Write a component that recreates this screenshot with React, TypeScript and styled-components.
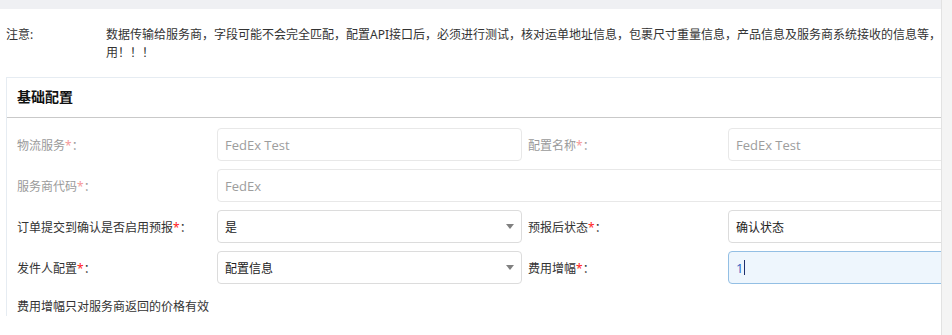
import React from "react";
import styled, { createGlobalStyle } from "styled-components";

const GlobalStyle = createGlobalStyle`
  html, body {
    margin: 0;
    padding: 0;
    background: #ffffff;
    overflow: hidden;
  }
  body {
    font-family: "Noto Sans", "Noto Sans CJK SC", sans-serif;
    font-size: 12px;
    color: #333333;
  }
`;

const Page = styled.div`
  display: flex;
  width: 952px;
  height: 335px;
  overflow: hidden;
`;

const Main = styled.div`
  flex: 1;
  min-width: 0;
  overflow: hidden;
`;

const Content = styled.div`
  width: 1040px;
`;

const ScrollTrack = styled.div`
  width: 10px;
  flex: none;
  background: #f4f4f4;
  border-left: 1px solid #e2e2e2;
`;

const TopStrip = styled.div`
  height: 9px;
  background: #eff0f3;
`;

const Notice = styled.div`
  display: flex;
  margin-top: 17px;
  line-height: 18px;
`;

const NoticeLabel = styled.div`
  width: 100px;
  flex: none;
  padding-left: 6px;
`;

const NoticeText = styled.div`
  width: 926px;
  flex: none;
`;

const Card = styled.section`
  margin: 15px 0 0 6px;
  width: 1040px;
  border: 1px solid #e6ecf2;
  border-right: none;
  border-bottom: none;
`;

const CardHeader = styled.h3`
  margin: 0;
  box-sizing: border-box;
  height: 40px;
  display: flex;
  align-items: center;
  padding: 0 0 2px 10px;
  font-size: 14px;
  line-height: 18px;
  font-weight: bold;
  color: #111111;
  border-bottom: 1px solid #c9c9c9;
`;

const CardBody = styled.div`
  padding: 10px 0 0 10px;
`;

const Row = styled.div`
  display: flex;
  align-items: center;
  height: 33px;
  margin-bottom: 8px;
`;

const Label = styled.div<{ $disabled?: boolean; $offset?: boolean }>`
  flex: none;
  box-sizing: border-box;
  width: ${(p) => (p.$offset ? "206px" : "200px")};
  padding-left: ${(p) => (p.$offset ? "6px" : "0")};
  color: ${(p) => (p.$disabled ? "#9a9a9a" : "#333333")};
  white-space: nowrap;
`;

const Star = styled.span<{ $disabled?: boolean }>`
  color: ${(p) => (p.$disabled ? "#f59a9a" : "#ff1a1a")};
`;

type Variant = "disabled" | "normal" | "focused";

const Control = styled.div<{ $variant: Variant; $wide?: boolean }>`
  flex: none;
  box-sizing: border-box;
  width: ${(p) => (p.$wide ? "816px" : "305px")};
  height: 33px;
  display: flex;
  align-items: center;
  justify-content: space-between;
  padding: 0 7px;
  border-radius: 4px;
  font-size: 12px;
  border: 1px solid
    ${(p) =>
      p.$variant === "disabled"
        ? "#e8e8e8"
        : p.$variant === "focused"
        ? "#93bfe4"
        : "#dcdcdc"};
  background: ${(p) => (p.$variant === "focused" ? "#eef6fd" : "#ffffff")};
  color: ${(p) =>
    p.$variant === "disabled"
      ? "#9d9d9d"
      : p.$variant === "focused"
      ? "#2b5fc4"
      : "#222222"};
`;

const Latin = styled.span`
  font-family: "Open Sans", "Noto Sans", sans-serif;
  font-size: 13px;
`;

const Value = styled.span`
  display: inline-flex;
  align-items: center;
`;

const Caret = styled.span`
  display: inline-block;
  width: 1px;
  height: 15px;
  margin-left: 1px;
  background: #1c2f6e;
`;

const Arrow = styled.span`
  width: 0;
  height: 0;
  border-left: 4.5px solid transparent;
  border-right: 4.5px solid transparent;
  border-top: 5px solid #808080;
`;

const Hint = styled.div`
  padding-top: 6px;
  line-height: 18px;
  color: #333333;
`;

const FieldLabel: React.FC<{ text: string; disabled?: boolean; offset?: boolean }> = ({
  text,
  disabled,
  offset,
}) => (
  <Label $disabled={disabled} $offset={offset}>
    {text}
    <Star $disabled={disabled}>*</Star>：
  </Label>
);

export default function App() {
  return (
    <>
      <GlobalStyle />
      <Page>
        <Main>
          <Content>
            <TopStrip />
            <Notice>
              <NoticeLabel>注意:</NoticeLabel>
              <NoticeText>
                数据传输给服务商，字段可能不会完全匹配，配置API接口后，必须进行测试，核对运单地址信息，包裹尺寸重量信息，产品信息及服务商系统接收的信息等，确认无误后再启用！！！
              </NoticeText>
            </Notice>
            <Card>
              <CardHeader>基础配置</CardHeader>
              <CardBody>
                <Row>
                  <FieldLabel text="物流服务" disabled />
                  <Control $variant="disabled">
                    <Latin>FedEx Test</Latin>
                  </Control>
                  <FieldLabel text="配置名称" disabled offset />
                  <Control $variant="disabled">
                    <Latin>FedEx Test</Latin>
                  </Control>
                </Row>
                <Row>
                  <FieldLabel text="服务商代码" disabled />
                  <Control $variant="disabled" $wide>
                    <Latin>FedEx</Latin>
                  </Control>
                </Row>
                <Row>
                  <FieldLabel text="订单提交到确认是否启用预报" />
                  <Control $variant="normal">
                    <Value>是</Value>
                    <Arrow />
                  </Control>
                  <FieldLabel text="预报后状态" offset />
                  <Control $variant="normal">确认状态</Control>
                </Row>
                <Row>
                  <FieldLabel text="发件人配置" />
                  <Control $variant="normal">
                    <Value>配置信息</Value>
                    <Arrow />
                  </Control>
                  <FieldLabel text="费用增幅" offset />
                  <Control $variant="focused">
                    <Value>
                      <Latin>1</Latin>
                      <Caret />
                    </Value>
                  </Control>
                </Row>
                <Hint>费用增幅只对服务商返回的价格有效</Hint>
              </CardBody>
            </Card>
          </Content>
        </Main>
        <ScrollTrack />
      </Page>
    </>
  );
}
